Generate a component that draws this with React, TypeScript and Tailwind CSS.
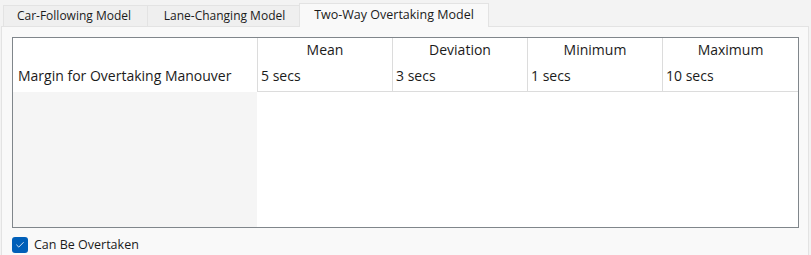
import { Check } from 'lucide-react'

const tabs = [
  { label: 'Car-Following Model', w: 'w-[144px] pr-[3px]' },
  { label: 'Lane-Changing Model', w: 'w-[152px] pl-[2px]' },
  { label: 'Two-Way Overtaking Model', w: 'w-[190px]' },
]
const columns = ['Mean', 'Deviation', 'Minimum', 'Maximum']
const values = ['5 secs', '3 secs', '1 secs', '10 secs']

export default function App() {
  return (
    <div className="flex h-[255px] w-[811px] flex-col bg-[#f3f3f3] font-['Open_Sans',sans-serif] text-[#1b1b1b]">
      {/* Tab strip */}
      <div className="flex h-[26px] items-end pl-[3px]">
        {tabs.map((t, i) => {
          const active = i === tabs.length - 1
          return active ? (
            <div
              key={t.label}
              className={`relative z-10 -mb-px flex h-[24px] items-center justify-center border border-b-0 border-[#e3e3e3] bg-[#f9f9f9] text-[12.5px] ${t.w}`}
            >
              {t.label}
            </div>
          ) : (
            <div
              key={t.label}
              className={`flex h-[21px] items-center justify-center border border-r-0 border-b-0 border-[#e3e3e3] bg-[#efefef] text-[12px] ${t.w}`}
            >
              {t.label}
            </div>
          )
        })}
      </div>

      {/* Tab panel */}
      <div className="mx-[1px] mr-[2px] flex flex-1 flex-col border border-b-0 border-[#e3e3e3] bg-[#f9f9f9] pl-[10px] pr-[9px] pt-[10px]">
        <div className="flex h-[191px] border border-[#80868b] text-[14px]">
          {/* Row header column */}
          <div className="flex w-[244px] flex-col">
            <div className="h-[24px] bg-white" />
            <div className="flex h-[30px] items-center bg-white pb-[3px] pl-[5px]">
              Margin for Overtaking Manouver
            </div>
            <div className="flex-1 bg-[#f5f5f5]" />
          </div>
          {/* Cells */}
          <div className="flex flex-1 flex-col bg-white">
            <div className="flex">
              {columns.map((c, i) => (
                <div key={c} className="flex w-[135px] flex-col border-l border-[#dcdcdc] last:flex-1">
                  <div className="flex h-[24px] items-center justify-center pb-[2px]">{c}</div>
                  <div className="flex h-[30px] items-center border-b border-[#dcdcdc] pb-[3px] pl-[3px]">
                    {values[i]}
                  </div>
                </div>
              ))}
            </div>
          </div>
        </div>

        {/* Checkbox */}
        <label className="mt-[8px] flex items-center gap-[6px] text-[12.5px]">
          <span className="flex h-[16px] w-[16px] items-center justify-center rounded-[3px] bg-[#005fb8]">
            <Check size={10} strokeWidth={2} className="text-white" />
          </span>
          Can Be Overtaken
        </label>
      </div>
    </div>
  )
}
